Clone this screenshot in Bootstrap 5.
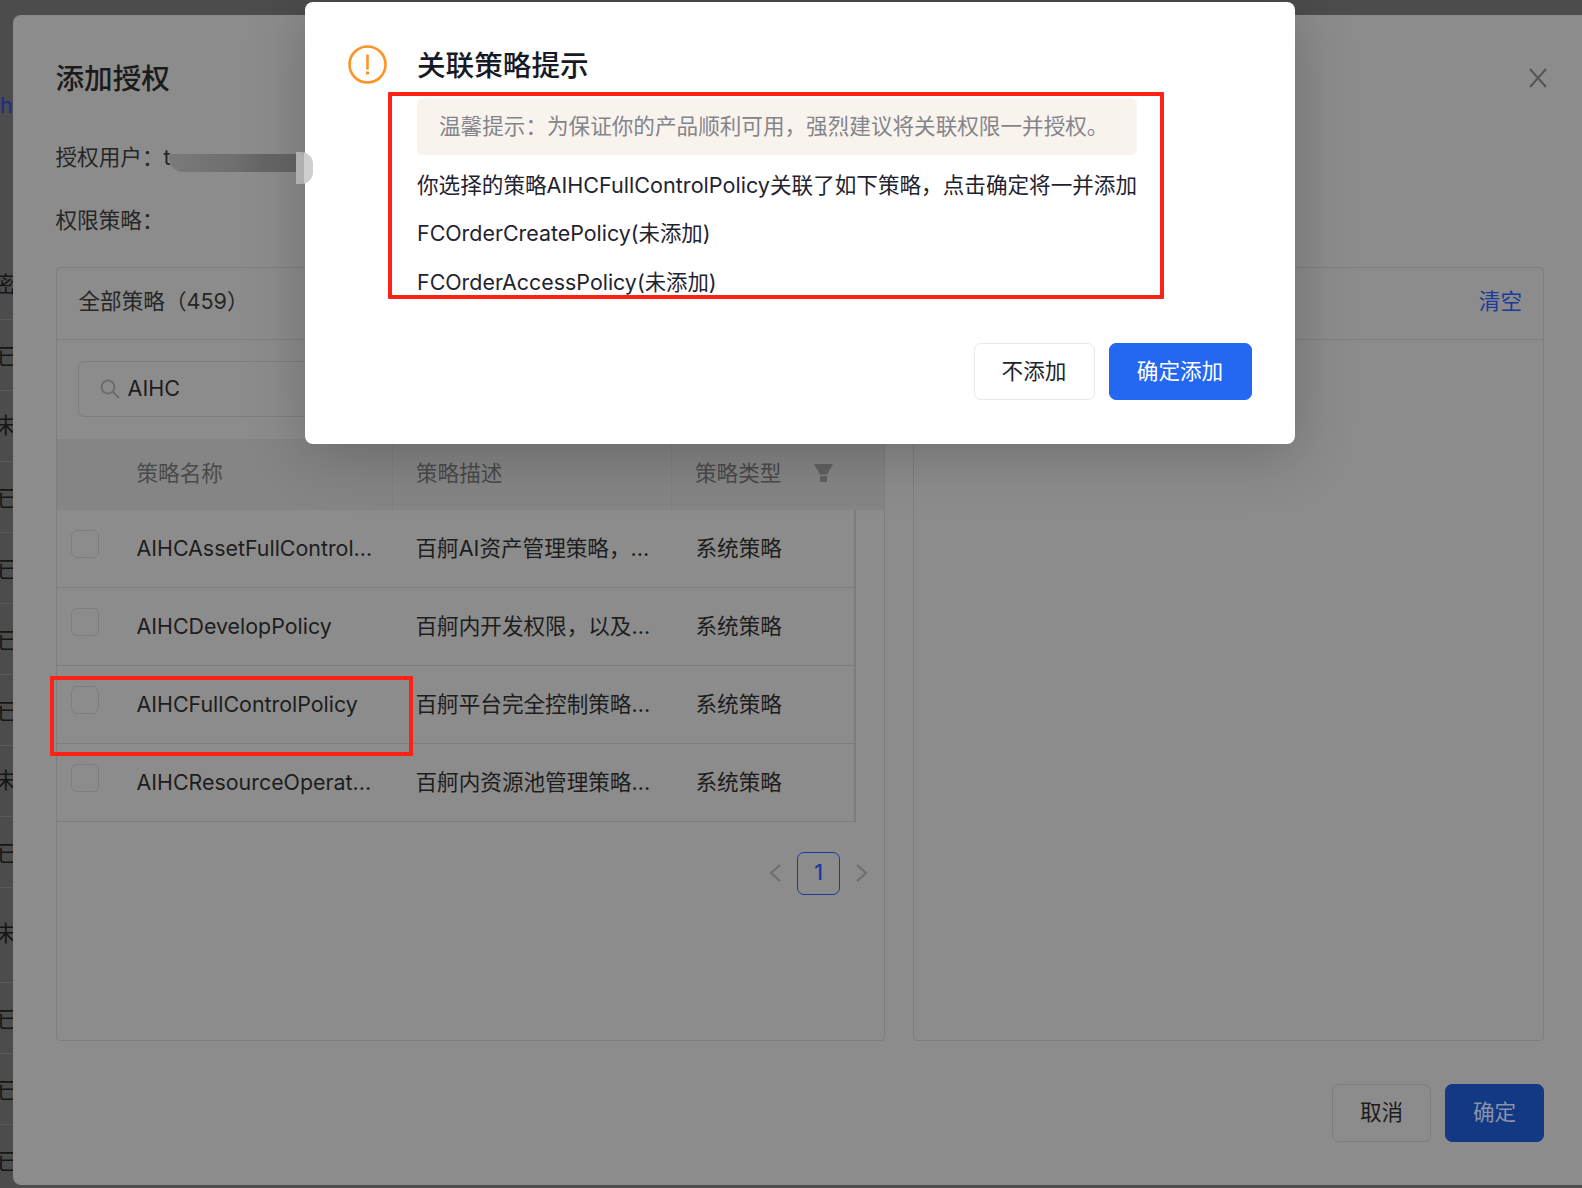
<!doctype html>
<html lang="zh-CN">

<head>
  <meta charset="utf-8" />
  <meta name="viewport" content="width=device-width, initial-scale=1" />
  <title>添加授权</title>
  <link href="https://cdn.jsdelivr.net/npm/bootstrap@5.3.5/dist/css/bootstrap.min.css" rel="stylesheet" />
  <style>
    body {
      position: relative;
      width: 1582px;
      height: 1188px;
      overflow: hidden;
      background-color: #4c4c4c;
      font-family: Inter, "Noto Sans CJK SC", sans-serif;
      font-size: 21.6px;
      color: #1d1d1d;
    }

    /* page behind the drawer, only a sliver of it shows */
    .page-sliver {
      width: 13px;
      height: 1188px;
      overflow: hidden;
      color: #161616;
      line-height: 30px;
      white-space: nowrap;
    }

    .sliver-top { height: 320px; border-bottom: 1px solid #5a5a5a; margin-left: -5px; }
    .sliver-h { padding-top: 90px; padding-left: 5px; height: 269px; color: #1b2a86; }
    .sliver-row { height: 71px; padding-top: 21px; border-bottom: 1px solid #5a5a5a; margin-left: -3px; }
    .sliver-row.is-no { padding-top: 19px; margin-left: -5px; }
    .sliver-row.is-tall { height: 95px; padding-top: 30px; }

    .auth-drawer {
      position: absolute;
      left: 13px;
      top: 15px;
      width: 1569px;
      height: 1170px;
      padding: 44px 38px 0 42.5px;
      background-color: #8c8c8c;
      border-radius: 8px 0 0 8px;
    }

    .drawer-title { font-size: 28.6px; font-weight: 500; line-height: 40px; color: #1b1b1b; }
    .form-line { line-height: 40px; color: #262626; }
    .close-x { margin-right: -3px; margin-top: -2px; }

    .policy-card {
      height: 774px;
      background: transparent;
      border: 1px solid #7e7e7e;
      border-radius: 4px;
      --bs-card-bg: transparent;
    }

    .policy-left { width: 829.5px; }
    .policy-right { width: 631px; }

    .policy-head {
      height: 72px;
      padding: 0 22px;
      background: transparent;
      border-bottom: 1px solid #7e7e7e;
      border-radius: 0;
      line-height: 1;
      color: #262626;
    }

    .head-count { margin-top: -4px; }
    .clear-link { margin-top: -4px; margin-right: -1px; color: #1c3a9c; text-decoration: none; }

    .search-box {
      width: 700px;
      height: 56px;
      margin: 21px 0 22px 21px;
      padding: 0 21px;
      border: 1px solid #7e7e7e;
      border-radius: 6px;
    }

    .search-word { margin-top: -2px; }

    .policy-table {
      width: 100%;
      margin: 0;
      table-layout: fixed;
      --bs-table-bg: transparent;
      --bs-table-color: #1d1d1d;
      --bs-table-border-color: #7e7e7e;
    }

    .policy-table th {
      height: 71px;
      padding: 0 0 3px;
      background-color: #858585;
      font-weight: 400;
      color: #4a4a4a;
      vertical-align: middle;
      border-bottom: 0;
    }

    .policy-table th + th { border-left: 1px solid #7e7e7e; }
    .policy-table th:nth-child(2) { border-left: 0; }

    .policy-table td {
      height: 78px;
      padding: 0;
      vertical-align: middle;
      border-bottom: 1px solid #7e7e7e;
    }

    .policy-table tbody tr:first-child td { height: 77px; }
    .policy-table td.check-cell { vertical-align: top; padding: 20px 0 0 14px; }
    .policy-table td.scroll-gutter { border-bottom: 0; border-left: 2px solid #7c7c7c; }

    .cell-name { padding-left: 21px !important; }
    td.cell-name { font-size: 21.4px; }
    .cell-desc { padding-left: 23px !important; }
    .cell-type { padding-left: 24px !important; }
    th.cell-type { padding-left: 23px !important; }

    .box-check {
      width: 28px;
      height: 28px;
      border: 1px solid #7e7e7e;
      border-radius: 6px;
    }

    .pager-row { margin: 30px 16px 0 0; gap: 16px; }

    .page-one {
      width: 43px;
      height: 43px;
      border: 1px solid #1c3a9c;
      border-radius: 7px;
      color: #1c3a9c;
      font-size: 21px;
      font-weight: 500;
    }

    .foot-row { margin-top: 43px; gap: 14px; }

    .foot-btn {
      width: 99px;
      height: 57.5px;
      padding: 0 0 2px;
      font-size: 21.6px;
      border-radius: 7px;
      background: transparent;
      border: 1px solid #7e7e7e;
      color: #1d1d1d;
    }

    .foot-btn.is-main { background-color: #133984; border-color: #133984; color: #8a93a8; }

    /* blurred user name */
    .name-smudge {
      position: absolute;
      left: 169px;
      top: 154px;
      width: 128px;
      height: 18px;
      border-radius: 0 0 0 14px;
      background: linear-gradient(90deg, #7a7a7a, #6f6f6f 50%, #656565 75%, #666);
      filter: blur(.6px);
    }

    .name-chip {
      position: absolute;
      left: 296px;
      top: 152px;
      width: 17px;
      height: 32px;
      border-radius: 0 12px 12px 0;
      background: linear-gradient(90deg, #b0b0b0 50%, #cfcfcf 50%);
      z-index: 3;
    }

    /* hint dialog */
    .hint-dialog {
      position: absolute;
      left: 305px;
      top: 2px;
      width: 990px;
      padding: 43px 43.5px 44px 43px;
      background-color: #fff;
      border: 0;
      border-radius: 8px;
      box-shadow: 0 10px 60px rgba(0, 0, 0, .22);
      z-index: 2;
    }

    .hint-head { gap: 30px; height: 39px; }
    .hint-title { font-size: 28.6px; font-weight: 500; line-height: 39px; color: #151a26; margin: 2px 0 0; }
    .hint-body { margin-left: 69px; margin-top: 14px; }

    .hint-tip {
      width: 719.5px;
      height: 57px;
      margin: 0 0 6px;
      padding: 0 22px;
      background-color: #f9f3ed;
      border: 0;
      border-radius: 6px;
      color: #83858b;
      line-height: 57px;
      white-space: nowrap;
    }

    .hint-line { line-height: 48px; color: #1f2330; white-space: nowrap; }
    .hint-name { font-size: 21.4px; }
    .hint-line:last-child { margin-top: 1px; }
    .hint-foot { margin-top: 37px; gap: 14px; }

    .hint-btn {
      height: 57px;
      padding: 0;
      font-size: 21.6px;
      border-radius: 7px;
    }

    .hint-no { width: 121px; background: #fff; border: 1px solid #e8e9eb; color: #1f2330; }
    .hint-yes { width: 143px; background-color: #2468f2; border: 1px solid #2468f2; color: #fff; }

    /* red marks drawn on the screenshot */
    .red-mark {
      position: absolute;
      border: 4px solid #ff2116;
      border-radius: 1px;
      z-index: 4;
    }

    .mark-text { left: 388px; top: 92px; width: 776px; height: 207px; }
    .mark-row { left: 50px; top: 676px; width: 363px; height: 80px; }
  </style>
</head>

<body>
  <div class="page-sliver">
    <div class="sliver-top">
      <div class="sliver-h">h</div>
      <div>密</div>
    </div>
    <div class="sliver-row">已</div>
    <div class="sliver-row is-no">未</div>
    <div class="sliver-row">已</div>
    <div class="sliver-row">已</div>
    <div class="sliver-row">已</div>
    <div class="sliver-row">已</div>
    <div class="sliver-row is-no">未</div>
    <div class="sliver-row">已</div>
    <div class="sliver-row is-no is-tall">未</div>
    <div class="sliver-row">已</div>
    <div class="sliver-row">已</div>
    <div class="sliver-row">已</div>
  </div>

  <div class="auth-drawer">
    <div class="d-flex justify-content-between align-items-center">
      <div class="drawer-title">添加授权</div>
      <svg class="close-x" width="18" height="20" viewBox="0 0 18 20" fill="none" stroke="#555" stroke-width="2">
        <path d="M1 1l16 18M17 1L1 19" />
      </svg>
    </div>
    <div class="form-line" style="margin-top:38px">授权用户：t</div>
    <div class="form-line" style="margin-top:23px">权限策略：</div>

    <div class="d-flex justify-content-between" style="margin-top:27px">
      <div class="card policy-card policy-left">
        <div class="card-header policy-head d-flex align-items-center"><span class="head-count">全部策略（459）</span></div>
        <div class="search-box d-flex align-items-center gap-2">
          <svg width="20" height="20" viewBox="0 0 20 20" fill="none" stroke="#6d6d6d" stroke-width="2">
            <circle cx="8" cy="8" r="6.5" />
            <path d="M13 13l6 6" />
          </svg>
          <span class="search-word">AIHC</span>
        </div>
        <table class="table policy-table">
          <colgroup>
            <col style="width:59px" />
            <col style="width:277px" />
            <col style="width:279px" />
            <col style="width:183px" />
            <col />
          </colgroup>
          <thead>
            <tr>
              <th></th>
              <th class="cell-name">策略名称</th>
              <th class="cell-desc">策略描述</th>
              <th class="cell-type" colspan="2">
                <span class="d-flex align-items-center" style="gap:33px">策略类型
                  <svg width="19" height="18" viewBox="0 0 19 18" fill="#616161">
                    <path d="M0 0h19l-6 10.5H6z" />
                    <path d="M6 12h7v6H6z" />
                  </svg>
                </span>
              </th>
            </tr>
          </thead>
          <tbody>
            <tr>
              <td class="check-cell"><div class="box-check"></div></td>
              <td class="cell-name">AIHCAssetFullControl...</td>
              <td class="cell-desc">百舸AI资产管理策略，...</td>
              <td class="cell-type">系统策略</td>
              <td class="scroll-gutter"></td>
            </tr>
            <tr>
              <td class="check-cell"><div class="box-check"></div></td>
              <td class="cell-name">AIHCDevelopPolicy</td>
              <td class="cell-desc">百舸内开发权限，以及...</td>
              <td class="cell-type">系统策略</td>
              <td class="scroll-gutter"></td>
            </tr>
            <tr>
              <td class="check-cell"><div class="box-check"></div></td>
              <td class="cell-name">AIHCFullControlPolicy</td>
              <td class="cell-desc">百舸平台完全控制策略...</td>
              <td class="cell-type">系统策略</td>
              <td class="scroll-gutter"></td>
            </tr>
            <tr>
              <td class="check-cell"><div class="box-check"></div></td>
              <td class="cell-name">AIHCResourceOperat...</td>
              <td class="cell-desc">百舸内资源池管理策略...</td>
              <td class="cell-type">系统策略</td>
              <td class="scroll-gutter"></td>
            </tr>
          </tbody>
        </table>
        <div class="pager-row d-flex justify-content-end align-items-center">
          <svg width="12" height="18" viewBox="0 0 12 18" fill="none" stroke="#6e6e6e" stroke-width="2">
            <path d="M11 1L2 9l9 8" />
          </svg>
          <div class="page-one d-flex align-items-center justify-content-center">1</div>
          <svg width="12" height="18" viewBox="0 0 12 18" fill="none" stroke="#6e6e6e" stroke-width="2">
            <path d="M1 1l9 8-9 8" />
          </svg>
        </div>
      </div>

      <div class="card policy-card policy-right">
        <div class="card-header policy-head d-flex align-items-center justify-content-end">
          <a class="clear-link" href="#">清空</a>
        </div>
      </div>
    </div>

    <div class="foot-row d-flex justify-content-end">
      <button type="button" class="btn foot-btn">取消</button>
      <button type="button" class="btn foot-btn is-main">确定</button>
    </div>
  </div>

  <div class="name-smudge"></div>
  <div class="name-chip"></div>

  <div class="modal-content hint-dialog">
    <div class="hint-head d-flex align-items-center">
      <svg width="39" height="39" viewBox="0 0 39 39" fill="none">
        <circle cx="19.5" cy="19.5" r="18" stroke="#ff9326" stroke-width="2.6" />
        <path d="M19.5 10.5v13" stroke="#ff9326" stroke-width="2.6" stroke-linecap="round" />
        <circle cx="19.5" cy="28" r="1.8" fill="#ff9326" />
      </svg>
      <h5 class="hint-title">关联策略提示</h5>
    </div>
    <div class="hint-body">
      <div class="alert hint-tip">温馨提示：为保证你的产品顺利可用，强烈建议将关联权限一并授权。</div>
      <div class="hint-line">你选择的策略AIHCFullControlPolicy关联了如下策略，点击确定将一并添加</div>
      <div class="hint-line hint-name">FCOrderCreatePolicy(未添加)</div>
      <div class="hint-line hint-name">FCOrderAccessPolicy(未添加)</div>
    </div>
    <div class="hint-foot d-flex justify-content-end">
      <button type="button" class="btn hint-btn hint-no">不添加</button>
      <button type="button" class="btn hint-btn hint-yes">确定添加</button>
    </div>
  </div>

  <div class="red-mark mark-text"></div>
  <div class="red-mark mark-row"></div>

  <script src="https://cdn.jsdelivr.net/npm/bootstrap@5.3.5/dist/js/bootstrap.bundle.min.js"></script>
</body>

</html>
